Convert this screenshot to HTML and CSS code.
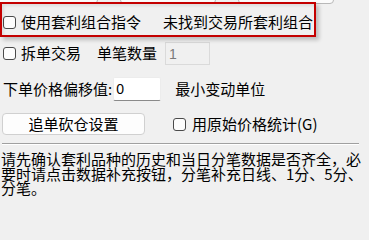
FILE: index.html
```html
<!DOCTYPE html>
<html lang="zh-CN">
<head>
<meta charset="utf-8">
<link rel="stylesheet" href="styles.css">
</head>
<body>
<div class="page">
  <div class="tabs">
    <div class="tab tab-1"></div>
    <div class="tab tab-2"></div>
    <div class="tab tab-3"></div>
  </div>
  <div class="row row-1">
    <span class="check"></span>
    <span class="label">使用套利组合指令</span>
    <span class="label status">未找到交易所套利组合</span>
  </div>
  <div class="row row-2">
    <span class="check"></span>
    <span class="label">拆单交易</span>
    <span class="label qty-label">单笔数量</span>
    <span class="input input-disabled">1</span>
  </div>
  <div class="row row-3">
    <span class="label">下单价格偏移值:</span>
    <span class="input input-active">0</span>
    <span class="label unit">最小变动单位</span>
  </div>
  <div class="row row-4">
    <button class="btn">追单砍仓设置</button>
    <span class="check check-g"></span>
    <span class="label">用原始价格统计(G)</span>
  </div>
  <div class="sep"></div>
  <p class="note">请先确认套利品种的历史和当日分笔数据是否齐全，必<br>要时请点击数据补充按钮，分笔补充日线、1分、5分、<br>分笔。</p>
  <div class="highlight"></div>
</div>
</body>
</html>
```
FILE: styles.css
```css
html, body {
  margin: 0;
  padding: 0;
  background: #f0f0f0;
}
body {
  width: 369px;
  height: 201px;
  overflow: hidden;
  font-family: "Noto Sans CJK SC", "Noto Sans", sans-serif;
  font-size: 15px;
  color: #000;
}
.page {
  position: relative;
  width: 369px;
  height: 201px;
}
.tabs {
  display: flex;
  height: 4px;
  overflow: hidden;
}
.tab {
  flex: none;
  height: 20px;
  margin-top: -16px;
  box-sizing: border-box;
  border: 1px solid #b8b8b8;
  border-radius: 4px;
  background: #fbfbfb;
}
.tab-1 { width: 100px; margin-left: -2px; }
.tab-2 { width: 96px; margin-left: 22px; }
.tab-3 { width: 96px; margin-left: 22px; }

.row {
  display: flex;
  align-items: center;
  white-space: nowrap;
}
.label {
  line-height: 16px;
  flex: none;
}
.check {
  flex: none;
  width: 13px;
  height: 13px;
  box-sizing: border-box;
  border: 1px solid #4a4a4a;
  border-radius: 3px;
  background: #fdfdfd;
  margin-left: 3px;
  margin-right: 5px;
}
.row-1 {
  height: 36px;
}
.status {
  margin-left: 22px;
}
.row-2 {
  height: 26px;
}
.qty-label {
  margin-left: 16px;
}
.input {
  flex: none;
  box-sizing: border-box;
  font-family: "Liberation Sans", "DejaVu Sans", sans-serif;
  font-size: 14px;
  line-height: 18px;
  padding: 2px 3px;
}
.input-disabled {
  width: 45px;
  height: 23px;
  margin-left: 8px;
  border: 1px solid #dadada;
  color: #7a7a7a;
  background: #f0f0f0;
}
.row-3 {
  height: 26px;
  margin-top: 10px;
  padding-left: 3px;
}
.input-active {
  width: 48px;
  height: 24px;
  margin-left: 1px;
  border: 1px solid #ececec;
  border-bottom: 1px solid #8a8a8a;
  border-radius: 2px;
  background: #fff;
  padding-left: 2px;
}
.unit {
  margin-left: 14px;
}
.row-4 {
  height: 24px;
  margin-top: 10px;
}
.btn {
  flex: none;
  width: 143px;
  height: 22px;
  margin-left: 2px;
  box-sizing: border-box;
  border: 1px solid #d0d0d0;
  border-radius: 4px;
  background: #fdfdfd;
  font: inherit;
  line-height: 16px;
  color: #000;
  padding: 0;
}
.check-g {
  margin-left: 28px;
  margin-right: 6px;
}
.sep {
  height: 1px;
  margin: 7px 10px 0 2px;
  background: #a0a0a0;
  border-bottom: 1px solid #fff;
}
.note {
  margin: 7px 0 0 1px;
  line-height: 14.5px;
  white-space: nowrap;
}
.highlight {
  position: absolute;
  left: 0;
  top: 2px;
  width: 316px;
  height: 35px;
  box-sizing: border-box;
  border: 2px solid #c40000;
  box-shadow: 3px 3px 4px rgba(0, 0, 0, 0.22), inset 2px 2px 3px rgba(0, 0, 0, 0.08);
  pointer-events: none;
}
```
